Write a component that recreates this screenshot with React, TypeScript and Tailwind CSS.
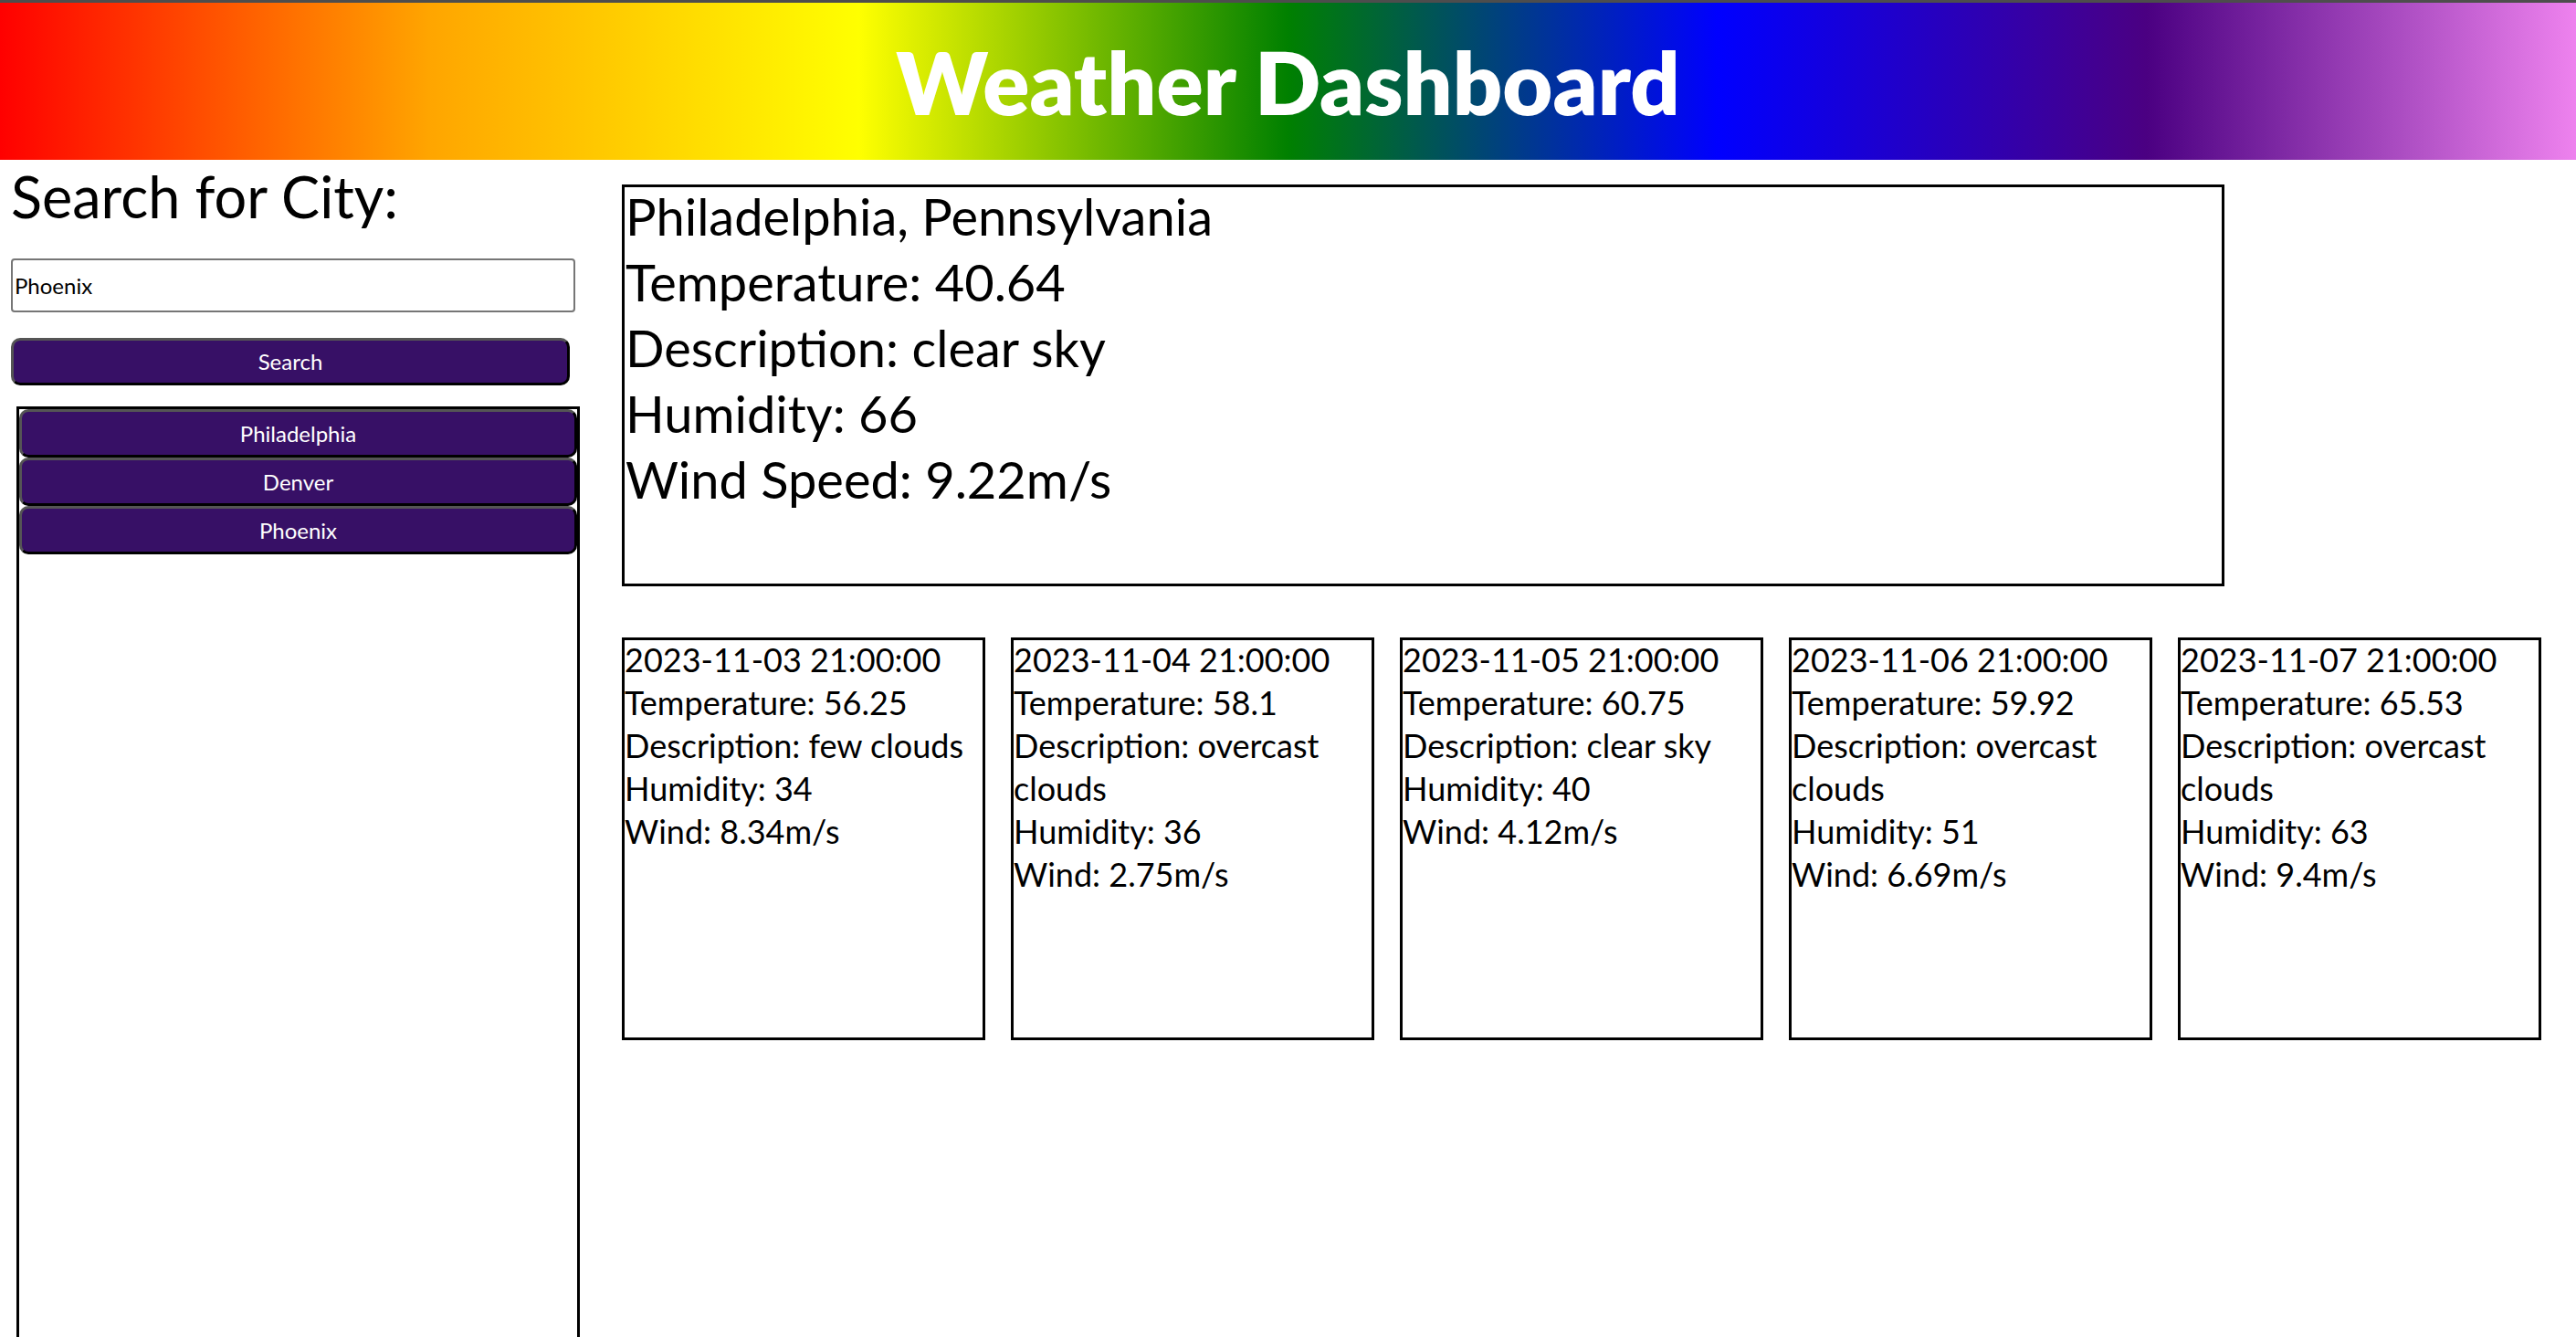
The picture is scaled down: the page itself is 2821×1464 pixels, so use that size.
const cities = ['Philadelphia', 'Denver', 'Phoenix']

const current = {
  name: 'Philadelphia, Pennsylvania',
  temp: '40.64',
  desc: 'clear sky',
  humidity: '66',
  wind: '9.22',
}

const forecast = [
  { date: '2023-11-03 21:00:00', temp: '56.25', desc: 'few clouds', humidity: '34', wind: '8.34' },
  { date: '2023-11-04 21:00:00', temp: '58.1', desc: 'overcast clouds', humidity: '36', wind: '2.75' },
  { date: '2023-11-05 21:00:00', temp: '60.75', desc: 'clear sky', humidity: '40', wind: '4.12' },
  { date: '2023-11-06 21:00:00', temp: '59.92', desc: 'overcast clouds', humidity: '51', wind: '6.69' },
  { date: '2023-11-07 21:00:00', temp: '65.53', desc: 'overcast clouds', humidity: '63', wind: '9.4' },
]

function CityButton({ label }: { label: string }) {
  return (
    <button className="block h-[53px] w-full rounded-[10px] border-[3px] border-t-[#555] border-l-[#555] border-r-black border-b-black bg-[#371066] text-[24px] text-white">
      {label}
    </button>
  )
}

export default function App() {
  return (
    <div className="h-[1464px] overflow-hidden bg-white font-['Lato',sans-serif] text-black">
      <header className="flex h-[175px] items-center justify-center border-t-[3px] border-[#4d4d4d] bg-[linear-gradient(to_right,red,orange,yellow,green,blue,indigo,violet)]">
        <h1 className="text-[95px] leading-none font-extrabold text-white">Weather Dashboard</h1>
      </header>

      <div className="flex">
        <aside className="ml-[12px] w-[623px] shrink-0">
          <h2 className="mt-[5px] text-[63px] leading-[70px]">Search for City:</h2>
          <input
            defaultValue="Phoenix"
            className="mt-[33px] block h-[59px] w-[618px] rounded-[4px] border-2 border-[#767676] px-[2px] text-[24px]"
          />
          <button className="mt-[28px] block h-[52px] w-[612px] rounded-[10px] border-[3px] border-t-[#555] border-l-[#555] border-r-black border-b-black bg-[#371066] text-[24px] text-white">
            Search
          </button>
          <div className="mt-[23px] ml-[6px] h-[1100px] w-[617px] border-[3px] border-black">
            {cities.map((c) => (
              <CityButton key={c} label={c} />
            ))}
          </div>
        </aside>

        <main className="ml-[46px] flex-1">
          <section className="mt-[27px] h-[440px] w-[1755px] border-[3px] border-black px-[1px] text-[56px] leading-[72px]">
            <div className="-mt-[4px]">
              <p>{current.name}</p>
              <p>Temperature: {current.temp}</p>
              <p>Description: {current.desc}</p>
              <p>Humidity: {current.humidity}</p>
              <p>Wind Speed: {current.wind}m/s</p>
            </div>
          </section>

          <div className="mt-[56px] flex gap-[28px]">
            {forecast.map((d) => (
              <div key={d.date} className="h-[441px] w-[398px] border-[3px] border-black text-[36px] leading-[47px]">
                <div className="-mt-[2px]">
                  <p>{d.date}</p>
                  <p>Temperature: {d.temp}</p>
                  <p>Description: {d.desc}</p>
                  <p>Humidity: {d.humidity}</p>
                  <p>Wind: {d.wind}m/s</p>
                </div>
              </div>
            ))}
          </div>
        </main>
      </div>
    </div>
  )
}
